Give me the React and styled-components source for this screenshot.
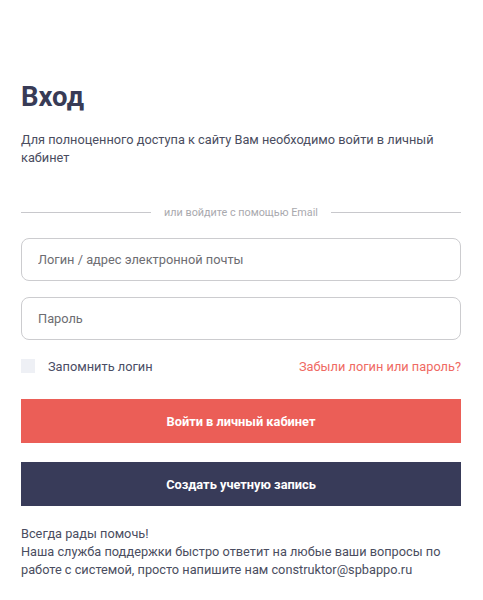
import React from "react";
import styled, { createGlobalStyle } from "styled-components";

const Global = createGlobalStyle`
  * { box-sizing: border-box; }
  body { margin: 0; background: #fff; font-family: Roboto, "Noto Sans", Arial, sans-serif; }
`;

const Page = styled.div`
  padding: 80px 22px 0 21px;
  display: flex;
  flex-direction: column;
`;

const Title = styled.h1`
  margin: 0;
  font-size: 27.5px;
  line-height: 34px;
  font-weight: 700;
  color: #383b56;
`;

const Text = styled.p`
  margin: ${(p) => p.$mt || 0}px 0 0;
  font-size: 12.75px;
  line-height: 18px;
  color: #4a4d60;
`;

const Divider = styled.div`
  margin-top: 37px;
  height: 16px;
  display: flex;
  align-items: center;
  gap: 13px;
  font-size: 10.8px;
  color: #a9a9ae;
  &::before, &::after {
    content: "";
    flex: 1;
    height: 1px;
    background: #c8c8cc;
  }
`;

const Input = styled.input`
  margin-top: ${(p) => p.$mt}px;
  width: 100%;
  height: 43px;
  border: 1px solid #cccccf;
  border-radius: 8px;
  padding: 0 16px;
  font-family: inherit;
  font-size: 12.8px;
  color: #333;
  outline: none;
  &::placeholder { color: #6d6d72; }
`;

const Row = styled.div`
  margin-top: 17px;
  height: 18px;
  display: flex;
  align-items: center;
  justify-content: space-between;
`;

const CheckLabel = styled.label`
  display: flex;
  align-items: center;
  gap: 13px;
  font-size: 12.8px;
  color: #4a4d65;
`;

const Box = styled.span`
  width: 14px;
  height: 14px;
  background: #eef0f5;
  display: inline-block;
`;

const Link = styled.a`
  font-size: 12.8px;
  color: #ef6a63;
  text-decoration: none;
`;

const Button = styled.button`
  margin-top: ${(p) => p.$mt}px;
  height: 44px;
  width: 100%;
  border: none;
  background: ${(p) => (p.$dark ? "#383b59" : "#eb5e57")};
  color: #fff;
  font-family: inherit;
  font-weight: 700;
  font-size: 12.8px;
`;

export default function App() {
  return (
    <>
      <Global />
      <Page>
        <Title>Вход</Title>
        <Text $mt={17}>
          Для полноценного доступа к сайту Вам необходимо войти в личный кабинет
        </Text>
        <Divider>или войдите с помощью Email</Divider>
        <Input $mt={18} placeholder="Логин / адрес электронной почты" />
        <Input $mt={16} type="password" placeholder="Пароль" />
        <Row>
          <CheckLabel>
            <Box />
            Запомнить логин
          </CheckLabel>
          <Link href="#">Забыли логин или пароль?</Link>
        </Row>
        <Button $mt={24}>Войти в личный кабинет</Button>
        <Button $mt={19} $dark>Создать учетную запись</Button>
        <Text $mt={19}>
          Всегда рады помочь!
          <br />
          Наша служба поддержки быстро ответит на любые ваши вопросы по работе с системой, просто напишите нам construktor@spbappo.ru
        </Text>
      </Page>
    </>
  );
}
